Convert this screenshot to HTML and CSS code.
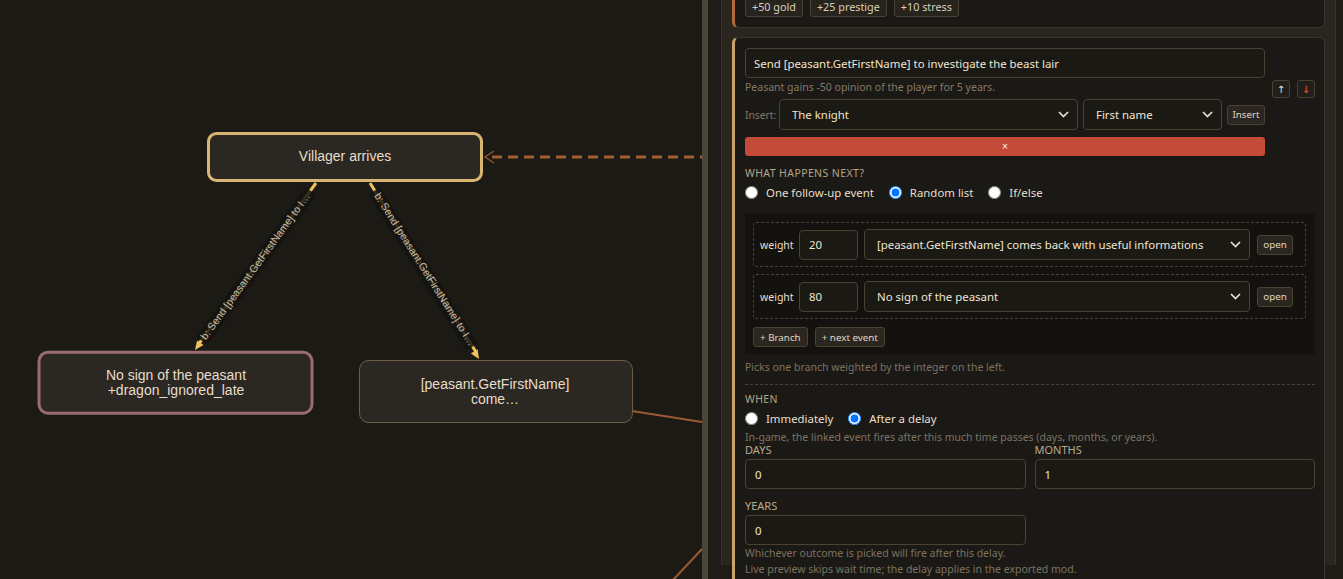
FILE: index.html
```html
<!DOCTYPE html>
<html lang="en">
<head>
    <meta charset="UTF-8">
    <title>Event editor</title>
    <link rel="stylesheet" href="styles.css">
</head>
<body>
<div class="app">
    <!-- graph canvas -->
    <div class="canvas">
        <svg class="graph" width="702" height="579" viewBox="0 0 702 579">
            <!-- links leaving the view -->
            <line x1="632" y1="411" x2="702" y2="422" class="link"/>
            <line x1="673" y1="580" x2="702" y2="549" class="link"/>

            <!-- dashed back-link into the start node -->
            <line x1="492" y1="157" x2="702" y2="157" class="back-link"/>
            <path d="M494 151 L485 157 L494 163" class="back-head"/>

            <!-- edge: start -> no sign -->
            <line x1="316" y1="183" x2="198" y2="345" class="edge"/>
            <polygon points="195,350 203.5,345 197.1,340.4" class="edge-head"/>
            <line x1="311" y1="191" x2="202" y2="341" class="edge-band"/>
            <text class="edge-label" transform="translate(255 266) rotate(-54)">b: Send [peasant.GetFirstName] to I…</text>

            <!-- edge: start -> comes back -->
            <line x1="370" y1="183" x2="476" y2="352" class="edge"/>
            <polygon points="479,359 477.6,349.3 470.8,353.5" class="edge-head"/>
            <line x1="374" y1="191" x2="472" y2="347" class="edge-band"/>
            <text class="edge-label" transform="translate(425 269) rotate(57.7)">b: Send [peasant.GetFirstName] to I…</text>

            <!-- nodes -->
            <rect x="208.5" y="133.5" width="273" height="47" rx="8" class="node node-start"/>
            <text x="345" y="161" class="node-text">Villager arrives</text>

            <rect x="39" y="352.2" width="273" height="61" rx="9" class="node node-end"/>
            <text x="176" y="380" class="node-text">No sign of the peasant</text>
            <text x="176" y="395" class="node-text">+dragon_ignored_late</text>

            <rect x="359.5" y="360.5" width="273" height="62" rx="9" class="node"/>
            <text x="495" y="389" class="node-text">[peasant.GetFirstName]</text>
            <text x="495" y="404" class="node-text">come…</text>
        </svg>
    </div>

    <div class="splitter"></div>

    <!-- editor panel -->
    <aside class="sidebar">
        <div class="stack">
            <div class="card card-prev">
                <div class="tags">
                    <span class="tag">+50 gold</span>
                    <span class="tag">+25 prestige</span>
                    <span class="tag">+10 stress</span>
                </div>
            </div>

            <div class="card">
                <div class="card-head">
                    <div class="card-main">
                        <input class="title-input" type="text" value="Send [peasant.GetFirstName] to investigate the beast lair">
                        <div class="hint">Peasant gains -50 opinion of the player for 5 years.</div>
                        <div class="insert-row">
                            <label class="insert-label">Insert:</label>
                            <select class="select select-who">
                                <option>The knight</option>
                            </select>
                            <select class="select select-what">
                                <option>First name</option>
                            </select>
                            <button class="small-btn insert-btn">Insert</button>
                        </div>
                        <button class="remove-btn">×</button>
                    </div>
                    <div class="move">
                        <button class="move-btn up">↑</button>
                        <button class="move-btn down">↓</button>
                    </div>
                </div>

                <div class="section-label">What happens next?</div>
                <div class="radios">
                    <label class="opt"><input type="radio" name="next"> One follow-up event</label>
                    <label class="opt"><input type="radio" name="next" checked> Random list</label>
                    <label class="opt"><input type="radio" name="next"> If/else</label>
                </div>

                <div class="branches">
                    <div class="branch">
                        <span class="weight-label">weight</span>
                        <input class="field weight-input" type="text" value="20">
                        <select class="select branch-select">
                            <option>[peasant.GetFirstName] comes back with useful informations</option>
                        </select>
                        <button class="small-btn open-btn">open</button>
                    </div>
                    <div class="branch">
                        <span class="weight-label">weight</span>
                        <input class="field weight-input" type="text" value="80">
                        <select class="select branch-select">
                            <option>No sign of the peasant</option>
                        </select>
                        <button class="small-btn open-btn">open</button>
                    </div>
                    <div class="branch-actions">
                        <button class="small-btn">+ Branch</button>
                        <button class="small-btn">+ next event</button>
                    </div>
                </div>
                <div class="note">Picks one branch weighted by the integer on the left.</div>

                <div class="divider"></div>

                <div class="section-label when-label">When</div>
                <div class="radios when-radios">
                    <label class="opt"><input type="radio" name="when"> Immediately</label>
                    <label class="opt"><input type="radio" name="when" checked> After a delay</label>
                </div>
                <div class="note delay-note">In-game, the linked event fires after this much time passes (days, months, or years).</div>

                <div class="delay-grid">
                    <div class="delay-field">
                        <div class="field-label">Days</div>
                        <input class="field" type="text" value="0">
                    </div>
                    <div class="delay-field">
                        <div class="field-label">Months</div>
                        <input class="field" type="text" value="1">
                    </div>
                    <div class="delay-field">
                        <div class="field-label">Years</div>
                        <input class="field" type="text" value="0">
                    </div>
                </div>
                <div class="note tail-note">Whichever outcome is picked will fire after this delay.</div>
                <div class="note tail-note">Live preview skips wait time; the delay applies in the exported mod.</div>
            </div>
        </div>
    </aside>
</div>
</body>
</html>
```

FILE: styles.css
```css
* {
    box-sizing: border-box;
}

html, body {
    margin: 0;
    height: 100%;
}

body {
    background-color: #1c1a15;
    font-family: "Noto Sans", sans-serif;
    color: #e8dfcc;
    overflow: hidden;
}

.app {
    display: flex;
    height: 579px;
}

/* graph */

.canvas {
    width: 702px;
    flex: none;
    background-color: #1c1a15;
}

.graph {
    display: block;
}

.link {
    stroke: #9a5b2f;
    stroke-width: 2;
}

.back-link {
    stroke: #9d5f33;
    stroke-width: 3;
    stroke-dasharray: 10 6;
}

.back-head {
    fill: none;
    stroke: #8a5530;
    stroke-width: 1.5;
}

.edge {
    stroke: #f0c25e;
    stroke-width: 3;
}

.edge-head {
    fill: #f0c25e;
}

.edge-band {
    stroke: #161410;
    stroke-width: 14;
    opacity: 0.85;
}

.edge-label {
    font-family: "Liberation Sans", Arial, sans-serif;
    font-size: 10.5px;
    fill: #c9bfa7;
    text-anchor: middle;
    dominant-baseline: central;
}

.node {
    fill: #2b2722;
    stroke: #6e5e45;
    stroke-width: 1;
}

.node-start {
    stroke: #d9b574;
    stroke-width: 3;
}

.node-end {
    stroke: #9b6b70;
    stroke-width: 3;
}

.node-text {
    font-family: "Liberation Sans", Arial, sans-serif;
    font-size: 14px;
    fill: #e6ddca;
    text-anchor: middle;
}

.splitter {
    width: 6px;
    flex: none;
    background-color: #4d4538;
}

/* editor panel */

.sidebar {
    flex: 1;
    background-color: #1f1c17;
    padding: 0 7px 0 13px;
    overflow: hidden;
}

.stack {
    height: 100%;
    background-color: #2a251f;
    border-left: 1px solid #3a342a;
    border-right: 1px solid #3a342a;
    padding: 0 10px;
}

.card {
    background-color: #1b1915;
    border: 1px solid #3a342b;
    border-left: 3px solid #c9a36a;
    border-radius: 6px;
    padding: 10px 9px 10px 10px;
}

.card-prev {
    border-left-color: #b0693a;
    margin-top: -14px;
}

.card + .card {
    margin-top: 9px;
}

.tags {
    display: flex;
    gap: 7px;
}

.tag {
    height: 20px;
    line-height: 18px;
    padding: 0 6px;
    font-size: 10.8px;
    color: #d8cfbc;
    background-color: #27231d;
    border: 1px solid #4a4234;
    border-radius: 3px;
}

.card-head {
    display: flex;
    gap: 7px;
}

.card-main {
    width: 520px;
}

.title-input,
.field,
.select {
    height: 30px;
    font-family: inherit;
    font-size: 11.4px;
    color: #efe6d3;
    background-color: #1b1914;
    border: 1px solid #4a4233;
    border-radius: 4px;
    outline: none;
}

.title-input {
    width: 100%;
    padding: 0 8px;
}

.field {
    width: 100%;
    padding: 0 9px;
}

.select {
    -webkit-appearance: none;
    appearance: none;
    height: 31px;
    padding: 0 24px 0 12px;
    background-image: url("data:image/svg+xml,%3Csvg xmlns='http://www.w3.org/2000/svg' width='11' height='7'%3E%3Cpath d='M1 1l4.5 4.5L10 1' fill='none' stroke='%23e8dfcc' stroke-width='1.7'/%3E%3C/svg%3E");
    background-repeat: no-repeat;
    background-position: right 8px center;
}

.hint {
    margin-top: 2px;
    font-size: 10.5px;
    line-height: 14px;
    color: #857a66;
}

.insert-row {
    display: flex;
    align-items: center;
    gap: 5px;
    margin-top: 5px;
}

.insert-label {
    width: 29px;
    font-size: 10.3px;
    color: #857a66;
}

.select-who {
    flex: 1;
}

.select-what {
    width: 139px;
}

.small-btn {
    height: 20px;
    padding: 0 6px;
    font-family: inherit;
    font-size: 9.8px;
    color: #e0d6c2;
    background-color: #2b2720;
    border: 1px solid #4a4233;
    border-radius: 3px;
}

.insert-btn {
    width: 38px;
    padding: 0;
}

.remove-btn {
    display: block;
    width: 100%;
    height: 19px;
    margin-top: 7px;
    font-size: 10px;
    color: #fff;
    background-color: #c44a3a;
    border: none;
    border-radius: 3px;
}

.move {
    display: flex;
    gap: 7px;
    padding-top: 32px;
}

.move-btn {
    width: 18px;
    height: 18px;
    padding: 0;
    font-family: "DejaVu Sans", sans-serif;
    font-size: 10px;
    background-color: #221f1a;
    border: 1px solid #4a4233;
    border-radius: 3px;
}

.move-btn.up {
    color: #dfe6df;
}

.move-btn.down {
    color: #e8604a;
}

.section-label {
    margin-top: 10px;
    font-size: 10.5px;
    line-height: 14px;
    letter-spacing: 0.4px;
    text-transform: uppercase;
    color: #b4a585;
}

.radios {
    display: flex;
    align-items: center;
    gap: 15px;
    height: 16px;
    margin-top: 4px;
    font-size: 11.4px;
}

.opt {
    display: flex;
    align-items: center;
    gap: 8px;
}

.opt input {
    width: 13px;
    height: 13px;
    margin: 0;
}

.branches {
    margin-top: 13px;
    padding: 9px 9px 7px 8px;
    background-color: #14120f;
}

.branch {
    display: flex;
    align-items: center;
    height: 45px;
    padding: 0 12px 0 6px;
    border: 1px dashed #4a4233;
    border-radius: 3px;
}

.branch + .branch {
    margin-top: 7px;
}

.weight-label {
    width: 33px;
    margin-right: 6px;
    font-size: 10.5px;
}

.weight-input {
    width: 59px;
    margin-right: 6px;
}

.branch-select {
    flex: 1;
    min-width: 0;
    margin-right: 7px;
}

.open-btn {
    width: 36px;
    padding: 0;
}

.branch-actions {
    display: flex;
    gap: 7px;
    margin-top: 8px;
}

.note {
    font-size: 10.5px;
    line-height: 14px;
    color: #7c7261;
}

.branches + .note {
    margin-top: 6px;
}

.divider {
    margin-top: 10px;
    border-top: 1px dashed #4a4233;
}

.when-label {
    margin-top: 7px;
}

.delay-note {
    margin-top: 5px;
    line-height: 12px;
}

.delay-grid {
    display: grid;
    grid-template-columns: 1fr 1fr;
    column-gap: 9px;
    row-gap: 10px;
}

.field-label {
    margin-top: 1px;
    margin-bottom: 4px;
    font-size: 11px;
    line-height: 11px;
    text-transform: uppercase;
    color: #b8ab8e;
}

.tail-note {
    line-height: 16px;
}
```
